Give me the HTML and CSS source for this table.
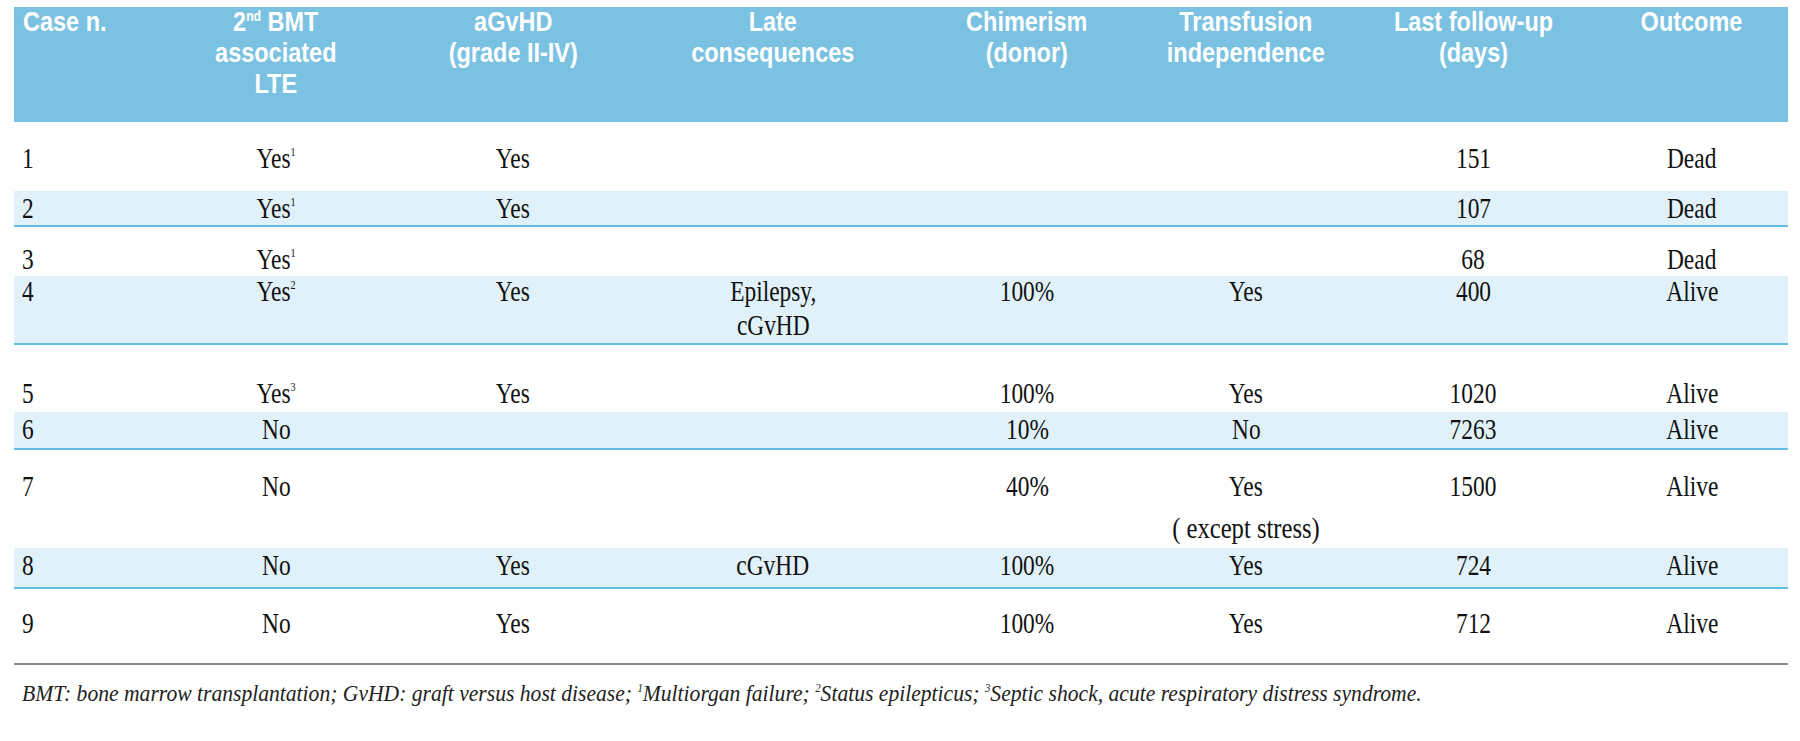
FILE: index.html
```html
<!DOCTYPE html>
<html lang="en">
<head>
<meta charset="utf-8">
<title>Table</title>
<link rel="stylesheet" href="styles.css">
</head>
<body>
<div class="page">
  <table class="cases">
    <colgroup>
      <col class="c1"><col class="c2"><col class="c3"><col class="c4"><col class="c5"><col class="c6"><col class="c7"><col class="c8">
    </colgroup>
    <thead>
      <tr class="head">
        <th class="first"><span class="h">Case n.</span></th>
        <th><span class="h">2<sup>nd</sup> BMT<br>associated<br>LTE</span></th>
        <th><span class="h">aGvHD<br>(grade II-IV)</span></th>
        <th><span class="h">Late<br>consequences</span></th>
        <th><span class="h">Chimerism<br>(donor)</span></th>
        <th><span class="h">Transfusion<br>independence</span></th>
        <th><span class="h">Last follow-up<br>(days)</span></th>
        <th><span class="h">Outcome</span></th>
      </tr>
    </thead>
    <tbody>
      <tr class="r1">
        <td class="first"><span class="t">1</span></td>
        <td><span class="t">Yes<sup>1</sup></span></td>
        <td><span class="t">Yes</span></td>
        <td></td><td></td><td></td>
        <td><span class="t">151</span></td>
        <td><span class="t">Dead</span></td>
      </tr>
      <tr class="alt r2">
        <td class="first"><span class="t">2</span></td>
        <td><span class="t">Yes<sup>1</sup></span></td>
        <td><span class="t">Yes</span></td>
        <td></td><td></td><td></td>
        <td><span class="t">107</span></td>
        <td><span class="t">Dead</span></td>
      </tr>
      <tr class="r3">
        <td class="first"><span class="t">3</span></td>
        <td><span class="t">Yes<sup>1</sup></span></td>
        <td></td><td></td><td></td><td></td>
        <td><span class="t">68</span></td>
        <td><span class="t">Dead</span></td>
      </tr>
      <tr class="alt r4">
        <td class="first"><span class="t">4</span></td>
        <td><span class="t">Yes<sup>2</sup></span></td>
        <td><span class="t">Yes</span></td>
        <td><span class="t multi">Epilepsy,<br>cGvHD</span></td>
        <td><span class="t">100%</span></td>
        <td><span class="t">Yes</span></td>
        <td><span class="t">400</span></td>
        <td><span class="t">Alive</span></td>
      </tr>
      <tr class="r5">
        <td class="first"><span class="t">5</span></td>
        <td><span class="t">Yes<sup>3</sup></span></td>
        <td><span class="t">Yes</span></td>
        <td></td>
        <td><span class="t">100%</span></td>
        <td><span class="t">Yes</span></td>
        <td><span class="t">1020</span></td>
        <td><span class="t">Alive</span></td>
      </tr>
      <tr class="alt r6">
        <td class="first"><span class="t">6</span></td>
        <td><span class="t">No</span></td>
        <td></td><td></td>
        <td><span class="t">10%</span></td>
        <td><span class="t">No</span></td>
        <td><span class="t">7263</span></td>
        <td><span class="t">Alive</span></td>
      </tr>
      <tr class="r7">
        <td class="first"><span class="t">7</span></td>
        <td><span class="t">No</span></td>
        <td></td><td></td>
        <td><span class="t">40%</span></td>
        <td><span class="t">Yes</span><span class="t sub">( except stress)</span></td>
        <td><span class="t">1500</span></td>
        <td><span class="t">Alive</span></td>
      </tr>
      <tr class="alt r8">
        <td class="first"><span class="t">8</span></td>
        <td><span class="t">No</span></td>
        <td><span class="t">Yes</span></td>
        <td><span class="t">cGvHD</span></td>
        <td><span class="t">100%</span></td>
        <td><span class="t">Yes</span></td>
        <td><span class="t">724</span></td>
        <td><span class="t">Alive</span></td>
      </tr>
      <tr class="r9">
        <td class="first"><span class="t">9</span></td>
        <td><span class="t">No</span></td>
        <td><span class="t">Yes</span></td>
        <td></td>
        <td><span class="t">100%</span></td>
        <td><span class="t">Yes</span></td>
        <td><span class="t">712</span></td>
        <td><span class="t">Alive</span></td>
      </tr>
    </tbody>
  </table>
  <p class="note"><span class="nt">BMT: bone marrow transplantation; GvHD: graft versus host disease; <sup>1</sup>Multiorgan failure; <sup>2</sup>Status epilepticus; <sup>3</sup>Septic shock, acute respiratory distress syndrome.</span></p>
</div>
</body>
</html>
```

FILE: styles.css
```css
html, body {
  margin: 0;
  padding: 0;
  background: #ffffff;
}

.page {
  padding: 7px 12px 0 14px;
}

.cases {
  border-collapse: collapse;
  table-layout: fixed;
  width: 1774px;
}

.c1 { width: 146px; }
.c2 { width: 232px; }
.c3 { width: 242px; }
.c4 { width: 278px; }
.c5 { width: 230px; }
.c6 { width: 208px; }
.c7 { width: 246px; }
.c8 { width: 192px; }

.head {
  height: 115px;
}

.head th {
  background: #7bc2e2;
  color: #ffffff;
  font-family: "Liberation Sans", Arial, sans-serif;
  font-weight: 700;
  font-size: 27px;
  line-height: 31px;
  text-align: center;
  vertical-align: top;
  padding: 0;
}

.h {
  display: inline-block;
  transform: scaleX(0.87);
  transform-origin: 50% 0;
}

.head th.first {
  text-align: left;
  padding-left: 9px;
}

.head th.first .h {
  transform-origin: 0 0;
}

.h sup {
  font-size: 14px;
  line-height: 0;
  vertical-align: 10px;
}

.cases td {
  font-family: "Liberation Serif", "Times New Roman", serif;
  font-size: 30px;
  line-height: 30px;
  color: #111111;
  text-align: center;
  vertical-align: top;
  padding: 21px 0 0 0;
}

.cases td.first {
  text-align: left;
  padding-left: 8px;
}

.t {
  display: inline-block;
  transform: scaleX(0.78);
  transform-origin: 50% 0;
}

.t.multi {
  line-height: 34px;
  margin-top: -2px;
}

.first .t {
  transform-origin: 0 0;
}

.t.sub {
  display: block;
  margin-top: 12px;
  transform: scaleX(0.82);
}

.t sup {
  font-size: 13px;
  line-height: 0;
  vertical-align: 12px;
}

.cases tr.alt td {
  background: #e0f1fa;
  padding-top: 2px;
  border-bottom: 2px solid #62bfe2;
}

.r1 { height: 69px; }
.r2 { height: 35px; }
.r3 { height: 50px; }
.r4 { height: 68px; }
.r5 { height: 68px; }
.r6 { height: 37px; }
.r7 { height: 99px; }
.r8 { height: 40px; }
.r9 { height: 75px; }

.cases tr.r3 td {
  padding-top: 17px;
}

.cases tr.r4 td {
  padding-top: 0;
}

.cases tr.r5 td {
  padding-top: 33px;
}

.cases tr.r9 td {
  padding-top: 19px;
}

.note {
  margin: 0;
  width: 1774px;
  border-top: 2px solid #8a8a8a;
  padding: 14px 0 0 8px;
  box-sizing: border-box;
  font-family: "Liberation Serif", "Times New Roman", serif;
  font-style: italic;
  font-size: 24px;
  line-height: 28px;
  color: #222222;
}

.nt {
  display: inline-block;
  white-space: nowrap;
  transform: scaleX(0.9);
  transform-origin: 0 0;
}

.note sup {
  font-size: 12px;
  line-height: 0;
  vertical-align: 9px;
}
```
